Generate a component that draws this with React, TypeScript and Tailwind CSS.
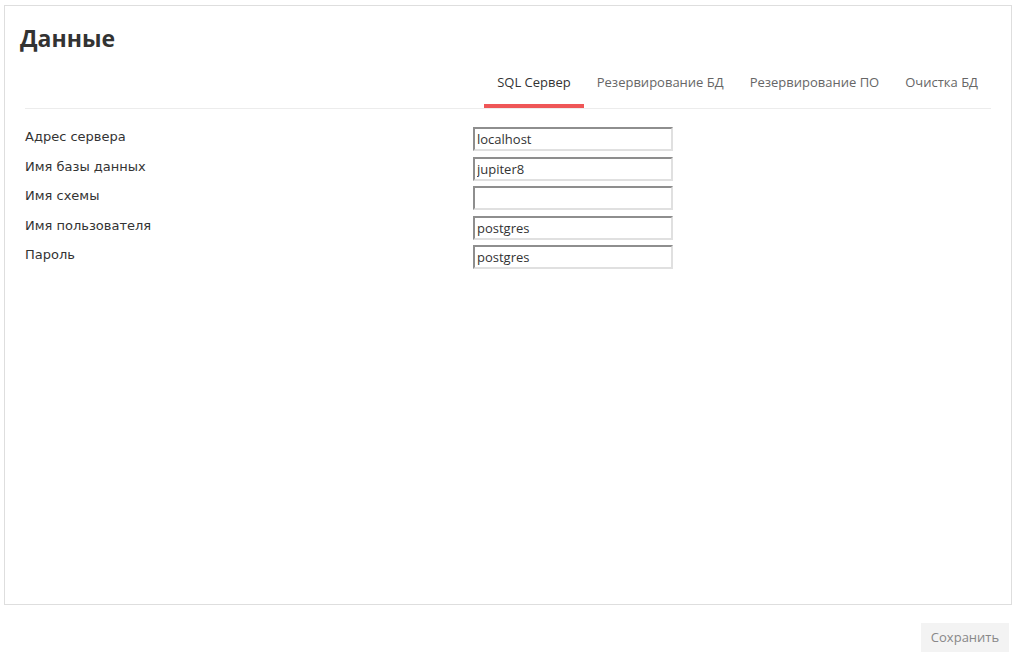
import React, { useState } from 'react';

const tabs = ['SQL Сервер', 'Резервирование БД', 'Резервирование ПО', 'Очистка БД'];

const fields = [
  { label: 'Адрес сервера', value: 'localhost' },
  { label: 'Имя базы данных', value: 'jupiter8' },
  { label: 'Имя схемы', value: '' },
  { label: 'Имя пользователя', value: 'postgres' },
  { label: 'Пароль', value: 'postgres' },
];

export default function App() {
  const [active, setActive] = useState(0);
  const [values, setValues] = useState(fields.map(f => f.value));

  return (
    <div className="w-[1019px] h-[656px] bg-white font-['Open_Sans',sans-serif] text-[#333]">
      <div className="ml-[4px] mt-[5px] w-[1008px] h-[600px] border border-[#dedede] px-[20px]">
        <h1 className="pt-[17px] -ml-[5px] text-[23px] leading-[30px] font-bold text-[#333]">Данные</h1>

        <div className="mt-[17px] flex justify-end border-b border-[#ececec]">
          {tabs.map((t, i) => (
            <button
              key={t}
              onClick={() => setActive(i)}
              className={`flex items-start pt-[2px] px-[13px] h-[38px] text-[13px] leading-[20px] border-b-[4px] ${
                i === active ? 'border-[#ef5657] text-[#333]' : 'border-transparent text-[#666]'
              }`}
            >
              {t}
            </button>
          ))}
        </div>

        <div className="mt-[18px]">
          {fields.map((f, i) => (
            <div key={f.label} className="flex items-start h-[29.5px]">
              <label className="w-[448px] pt-[1px] font-['DejaVu_Sans',sans-serif] text-[13px] leading-[18px] text-[#333]">
                {f.label}
              </label>
              <input
                type="text"
                value={values[i]}
                onChange={e => setValues(v => v.map((x, j) => (j === i ? e.target.value : x)))}
                className="w-[200px] h-[24px] px-[2px] text-[13px] leading-[20px] text-[#333] border-2 border-t-[#8e8e8e] border-l-[#8e8e8e] border-b-[#e0e0e0] border-r-[#e0e0e0] outline-none"
              />
            </div>
          ))}
        </div>
      </div>

      <div className="flex justify-end pr-[10px] mt-[18px]">
        <button className="w-[88px] h-[29px] bg-[#f3f3f3] text-[#888] text-[13px]">Сохранить</button>
      </div>
    </div>
  );
}
